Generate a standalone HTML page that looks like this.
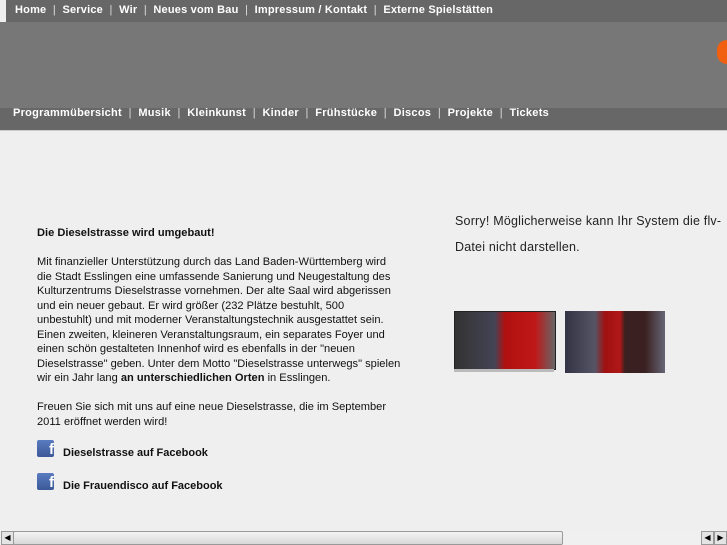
<!DOCTYPE html>
<html><head><meta charset="utf-8"><style>
body{margin:0;width:727px;height:545px;background:#efefef;font-family:"Liberation Sans",sans-serif;position:relative;overflow:hidden}
.top{position:absolute;left:6px;top:0;width:721px;height:22px;background:#676767}
.hdr{position:absolute;left:0;top:22px;width:727px;height:86px;background:#777}
.nav2{position:absolute;left:0;top:108px;width:727px;height:22px;background:#676767;border-bottom:1px solid #ccc}
.menu{position:absolute;color:#fff;font-weight:bold;font-size:11px;white-space:pre}
.menu span{font-weight:normal;color:#ddd}
.txt{position:absolute;left:37px;top:226px;width:364px;font-size:11.1px;line-height:14.5px;color:#111}
.fb{position:absolute;left:37px;width:17px;height:17px;background:linear-gradient(#5b7bc0,#3b5998);border-radius:2px;color:#fff;font-weight:bold;font-size:15px;text-align:right;line-height:20px;overflow:hidden}
.fbt{position:absolute;left:63px;font-weight:bold;font-size:11px;color:#111}
.sorry{position:absolute;left:455px;top:208px;font-size:12.5px;letter-spacing:0.2px;line-height:26px;color:#222;width:272px}
.vid{position:absolute;top:311px;width:100px;height:60px;background:linear-gradient(90deg,#333 0,#445 40%,#b01010 50%,#c01818 80%,#666 100%)}
.sb{position:absolute;left:0;top:530px;width:727px;height:15px;background:#f0f0f0}
</style></head><body>
<div class="top"></div>
<div class="hdr"></div>
<div style="position:absolute;left:717px;top:40px;width:12px;height:24px;background:#f06010;border-radius:10px 0 0 10px"></div>
<div class="nav2"></div>
<div class="menu" style="left:15px;top:4px;letter-spacing:0.2px">Home  <span>|</span>  Service  <span>|</span>  Wir  <span>|</span>  Neues vom Bau  <span>|</span>  Impressum / Kontakt  <span>|</span>  Externe Spielstätten</div>
<div class="menu" style="left:13px;top:107px;letter-spacing:0.26px">Programmübersicht  <span>|</span>  Musik  <span>|</span>  Kleinkunst  <span>|</span>  Kinder  <span>|</span>  Frühstücke  <span>|</span>  Discos  <span>|</span>  Projekte  <span>|</span>  Tickets</div>
<div class="txt"><b>Die Dieselstrasse wird umgebaut!</b><br><br>Mit finanzieller Unterstützung durch das Land Baden-Württemberg wird die Stadt Esslingen eine umfassende Sanierung und Neugestaltung des Kulturzentrums Dieselstrasse vornehmen. Der alte Saal wird abgerissen und ein neuer gebaut. Er wird größer (232 Plätze bestuhlt, 500 unbestuhlt) und mit moderner Veranstaltungstechnik ausgestattet sein. Einen zweiten, kleineren Veranstaltungsraum, ein separates Foyer und einen schön gestalteten Innenhof wird es ebenfalls in der "neuen Dieselstrasse" geben. Unter dem Motto "Dieselstrasse unterwegs" spielen wir ein Jahr lang <b>an unterschiedlichen Orten</b> in Esslingen.<br><br>Freuen Sie sich mit uns auf eine neue Dieselstrasse, die im September 2011 eröffnet werden wird!</div>
<div class="fb" style="top:440px">f</div><div class="fbt" style="top:447px">Dieselstrasse auf Facebook</div>
<div class="fb" style="top:473px">f</div><div class="fbt" style="top:480px">Die Frauendisco auf Facebook</div>
<div class="sorry">Sorry! Möglicherweise kann Ihr System die flv-Datei nicht darstellen.</div>
<div class="vid" style="left:454px;border:1px solid #222;height:57px"></div>
<div style="position:absolute;left:454px;top:369px;width:100px;height:3px;background:#bbb"></div>
<div class="vid" style="left:565px;height:62px;background:linear-gradient(90deg,#334 0,#556 30%,#a01010 40%,#b01818 55%,#3a2020 60%,#3a2020 80%,#667 100%)"></div>
<div class="sb">
<div style="position:absolute;left:1px;top:1px;width:11px;height:12px;border:1px solid #999;background:#e4e4e4;font-size:8px;line-height:12px;text-align:center">◀</div>
<div style="position:absolute;left:13px;top:1px;width:548px;height:12px;border:1px solid #999;background:linear-gradient(#f4f4f4,#d8d8d8);border-radius:2px"></div>
<div style="position:absolute;left:701px;top:1px;width:11px;height:12px;border:1px solid #999;background:#e4e4e4;font-size:8px;line-height:12px;text-align:center">◀</div>
<div style="position:absolute;left:714px;top:1px;width:11px;height:12px;border:1px solid #999;background:#e4e4e4;font-size:8px;line-height:12px;text-align:center">▶</div>
</div>
</body></html>
